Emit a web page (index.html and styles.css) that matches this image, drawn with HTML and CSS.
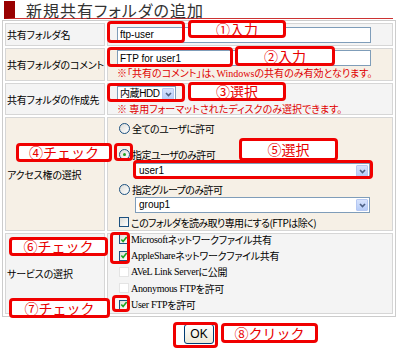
FILE: index.html
```html
<!DOCTYPE html>
<html lang="ja">
<head>
  <meta charset="UTF-8">
  <title>新規共有フォルダの追加</title>
  <link rel="stylesheet" href="styles.css">
</head>
<body>

  <div class="page">
    <h1 class="title">新規共有フォルダの追加</h1>

    <table class="form">
      <tr class="row-gray row-name">
        <th>共有フォルダ名</th>
        <td class="middle"><input class="text" type="text" value="ftp-user"></td>
      </tr>
      <tr class="row-beige row-comment">
        <th>共有フォルダのコメント</th>
        <td>
          <input class="text" type="text" value="FTP for user1">
          <p class="note">※「共有のコメント」は、<span class="latin">Windows</span>の共有のみ有効となります。</p>
        </td>
      </tr>
      <tr class="row-gray row-dest">
        <th>共有フォルダの作成先</th>
        <td>
          <div class="select select-small">
            <span class="select-value">内蔵HDD</span>
            <span class="select-arrow"><svg width="7" height="5" viewBox="0 0 7 5"><path d="M1 1 L3.5 3.6 L6 1" fill="none" stroke="#4d6185" stroke-width="1.6"/></svg></span>
          </div>
          <p class="note note-tight">※ 専用フォーマットされたディスクのみ選択できます。</p>
        </td>
      </tr>
      <tr class="row-beige row-access">
        <th>アクセス権の選択</th>
        <td>
          <div class="option option-first"><span class="radio"></span>全てのユーザに許可</div>
          <div class="option option-second"><span class="radio checked"></span>指定ユーザのみ許可</div>
          <div class="select select-wide select-user">
            <span class="select-value">user1</span>
            <span class="select-arrow"><svg width="7" height="5" viewBox="0 0 7 5"><path d="M1 1 L3.5 3.6 L6 1" fill="none" stroke="#4d6185" stroke-width="1.6"/></svg></span>
          </div>
          <div class="option option-third"><span class="radio"></span>指定グループのみ許可</div>
          <div class="select select-wide select-group">
            <span class="select-value">group1</span>
            <span class="select-arrow"><svg width="7" height="5" viewBox="0 0 7 5"><path d="M1 1 L3.5 3.6 L6 1" fill="none" stroke="#4d6185" stroke-width="1.6"/></svg></span>
          </div>
          <div class="option option-last"><span class="check"></span>このフォルダを読み取り専用にする(FTPは除く)</div>
        </td>
      </tr>
      <tr class="row-gray row-service">
        <th>サービスの選択</th>
        <td>
          <div class="service"><span class="check on"><svg width="9" height="9" viewBox="0 0 9 9"><path d="M1.5 4.5 L3.5 6.8 L7.5 1.8" fill="none" stroke="#21a121" stroke-width="1.8"/></svg></span><span class="latin">Microsoft</span>ネットワークファイル共有</div>
          <div class="service"><span class="check on"><svg width="9" height="9" viewBox="0 0 9 9"><path d="M1.5 4.5 L3.5 6.8 L7.5 1.8" fill="none" stroke="#21a121" stroke-width="1.8"/></svg></span><span class="latin">AppleShare</span>ネットワークファイル共有</div>
          <div class="service"><span class="check off"></span><span class="latin">AVeL Link Server</span>に公開</div>
          <div class="service"><span class="check off"></span><span class="latin">Anonymous FTP</span>を許可</div>
          <div class="service"><span class="check on"><svg width="9" height="9" viewBox="0 0 9 9"><path d="M1.5 4.5 L3.5 6.8 L7.5 1.8" fill="none" stroke="#21a121" stroke-width="1.8"/></svg></span><span class="latin">User FTP</span>を許可</div>
        </td>
      </tr>
    </table>

    <div class="actions">
      <button class="ok">OK</button>
    </div>

    <!-- Callouts -->
    <div class="frame frame-1"></div>
    <div class="tag tag-1">①入力</div>
    <div class="frame frame-2"></div>
    <div class="tag tag-2">②入力</div>
    <div class="frame frame-3"></div>
    <div class="tag tag-3">③選択</div>
    <div class="frame frame-4"></div>
    <div class="tag tag-4">④チェック</div>
    <div class="frame frame-5"></div>
    <div class="tag tag-5">⑤選択</div>
    <div class="frame frame-6"></div>
    <div class="tag tag-6">⑥チェック</div>
    <div class="frame frame-7"></div>
    <div class="tag tag-7">⑦チェック</div>
    <div class="frame frame-8"></div>
    <div class="tag tag-8">⑧クリック</div>
  </div>

</body>
</html>
```

FILE: styles.css
```css
body {
  margin: 0;
  background: #fff;
  font-family: "Noto Sans CJK JP", sans-serif;
  color: #000;
}

.page {
  position: relative;
  width: 400px;
  height: 351px;
  padding: 1px 0 0 2px;
  box-sizing: border-box;
  overflow: hidden;
}

/* Title */
.title {
  margin: 0 7px 0 2px;
  height: 17px;
  border-left: 11px solid #990000;
  border-bottom: 1px solid #cc3333;
  padding-left: 11px;
  font-size: 16px;
  line-height: 18px;
  font-weight: normal;
  color: #333;
  letter-spacing: 1px;
  font-feature-settings: "palt";
  white-space: nowrap;
}

/* Form table */
.form {
  margin-top: 1px;
  width: 394px;
  table-layout: fixed;
  border: 1px solid #cccccc;
  border-spacing: 2px;
}

.form th,
.form td {
  box-sizing: border-box;
  border: 1px solid #d6d6d6;
  padding: 0;
  vertical-align: top;
}

.form th {
  width: 100px;
  padding-left: 1px;
  text-align: left;
  vertical-align: middle;
  font-size: 10px;
  font-weight: normal;
  letter-spacing: -0.2px;
  font-feature-settings: "palt";
  white-space: nowrap;
}

.form td {
  padding-left: 9px;
}

.form td.middle {
  vertical-align: middle;
}

.row-gray th, .row-gray td { background: #f4f4f4; }
.row-beige th, .row-beige td { background: #f6f0e6; }

.row-name td { height: 23px; }
.row-comment td { height: 33px; padding-top: 1px; }
.row-dest td { height: 32px; padding-top: 2px; }
.row-access td { height: 114px; padding-top: 2px; }
.row-service td { height: 81px; }

.text {
  display: block;
  width: 254px;
  height: 16px;
  box-sizing: border-box;
  margin: 0;
  padding: 0 2px;
  border: 1px solid #7f9db9;
  background: #fff;
  font-family: "Liberation Sans", sans-serif;
  font-size: 10px;
  color: #000;
}

.note {
  margin: 1px 0 0;
  height: 12px;
  line-height: 12px;
  font-size: 10px;
  color: #e00000;
  font-feature-settings: "palt";
  white-space: nowrap;
}

.note-tight {
  height: 11px;
  line-height: 11px;
}

.latin {
  font-family: "Liberation Serif", serif;
}

/* XP style select */
.select {
  display: flex;
  height: 16px;
  box-sizing: border-box;
  border: 1px solid #7f9db9;
  background: #fff;
  font-family: "Liberation Sans", "Noto Sans CJK JP", sans-serif;
  font-size: 10px;
  white-space: nowrap;
}

.select-value {
  flex: 1;
  padding-left: 3px;
  line-height: 14px;
  overflow: hidden;
}

.select-arrow {
  display: flex;
  align-items: center;
  justify-content: center;
  width: 12px;
  margin: 1px;
  border: 1px solid #b6c8f2;
  border-radius: 1px;
  box-sizing: border-box;
  background: linear-gradient(#d7e3fd, #b6ccf8);
}

.select-small {
  width: 59px;
}

.select-small .select-value {
  padding-left: 2px;
  letter-spacing: -0.4px;
  overflow: visible;
}

.select-wide {
  width: 235px;
  margin-left: 18px;
}

.select-user { margin-top: 2px; }
.select-group { margin-top: 1px; }

/* Options */
.option {
  display: flex;
  align-items: center;
  height: 14px;
  font-size: 10px;
  letter-spacing: -0.6px;
  font-feature-settings: "palt";
  white-space: nowrap;
}

.option-first { margin-top: 1px; }
.option-second { margin-top: 12px; }
.option-third { margin-top: 3px; }
.option-last { margin-top: 2px; }

.radio {
  position: relative;
  flex: none;
  width: 11px;
  height: 11px;
  margin: 0 2px 0 2px;
  box-sizing: border-box;
  border: 1px solid #1c5180;
  border-radius: 50%;
  background: linear-gradient(135deg, #dcdcd7, #fff);
}

.radio.checked::after {
  content: "";
  position: absolute;
  left: 3px;
  top: 3px;
  width: 3px;
  height: 3px;
  border-radius: 50%;
  background: #21a121;
}

.check {
  display: flex;
  flex: none;
  align-items: center;
  justify-content: center;
  width: 10px;
  height: 10px;
  margin: 0 2px 0 2px;
  box-sizing: border-box;
  border: 1px solid #1c5180;
  background: linear-gradient(135deg, #dcdcd7, #fff);
}

.check.off {
  border-color: #e4e4e4;
  background: #fff;
}

.service {
  display: flex;
  align-items: center;
  height: 16.4px;
  font-size: 10px;
  letter-spacing: -0.3px;
  font-feature-settings: "palt";
  white-space: nowrap;
}

.service:first-child {
  margin-top: -3px;
}

/* OK button */
.actions {
  display: flex;
  justify-content: center;
  width: 394px;
  margin-top: 7px;
}

.ok {
  width: 30px;
  height: 20px;
  padding: 0;
  border: 1px solid #003c74;
  border-radius: 3px;
  background: linear-gradient(#ffffff, #ece9d8);
  font-family: "Liberation Sans", sans-serif;
  font-size: 12px;
  color: #000;
}

/* Red callouts */
.frame,
.tag {
  position: absolute;
  box-sizing: border-box;
  border: 3px solid #f00000;
  border-radius: 4px;
}

.tag {
  background: #fff;
  color: #e80000;
  font-size: 14px;
  text-align: center;
  white-space: nowrap;
}

.frame-1 { left: 107px; top: 21px; width: 78px; height: 22px; }
.frame-2 { left: 107px; top: 47px; width: 126px; height: 20px; }
.frame-3 { left: 107px; top: 83px; width: 78px; height: 19px; }
.frame-4 { left: 114px; top: 143px; width: 19px; height: 18px; }
.frame-5 { left: 133px; top: 160px; width: 240px; height: 19px; }
.frame-6 { left: 110px; top: 232px; width: 20px; height: 32px; }
.frame-7 { left: 112px; top: 295px; width: 18px; height: 17px; }
.frame-8 { left: 173px; top: 322px; width: 45px; height: 26px; }

.tag-1 { left: 188px; top: 20px; width: 98px; height: 18px; line-height: 12px; }
.tag-2 { left: 235px; top: 46px; width: 100px; height: 20px; line-height: 14px; }
.tag-3 { left: 188px; top: 82px; width: 98px; height: 19px; line-height: 13px; }
.tag-4 { left: 16px; top: 143px; width: 96px; height: 19px; line-height: 13px; }
.tag-5 { left: 239px; top: 138px; width: 99px; height: 23px; line-height: 17px; }
.tag-6 { left: 9px; top: 237px; width: 99px; height: 19px; line-height: 13px; }
.tag-7 { left: 9px; top: 298px; width: 101px; height: 20px; line-height: 14px; }
.tag-8 { left: 221px; top: 323px; width: 97px; height: 20px; line-height: 14px; }
```
